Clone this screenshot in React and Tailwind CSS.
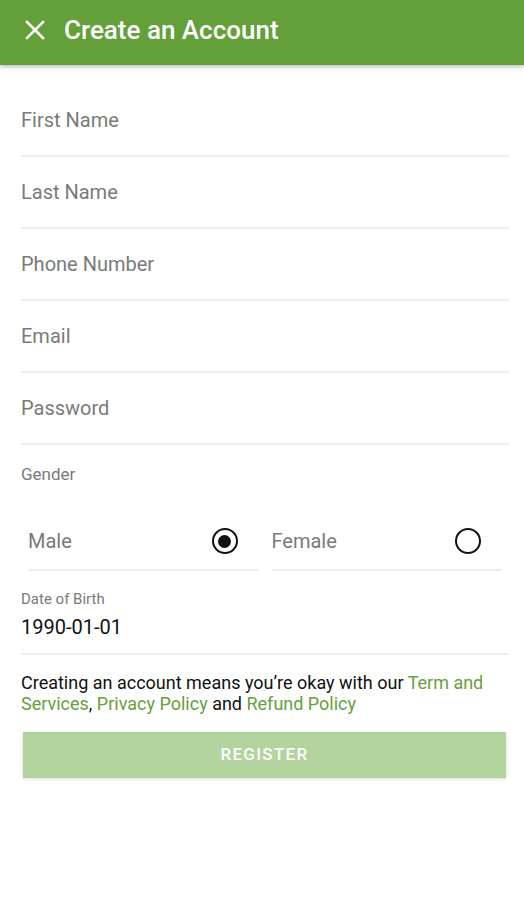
import React, { useState } from 'react';

const fields = ['First Name', 'Last Name', 'Phone Number', 'Email', 'Password'];

const Radio = ({ checked }) => (
  <span className="flex h-[26px] w-[26px] items-center justify-center rounded-full border-[2.5px] border-[#111]">
    {checked && <span className="h-[13px] w-[13px] rounded-full bg-[#111]"></span>}
  </span>
);

const App = () => {
  const [gender, setGender] = useState('male');

  return (
    <div className="min-h-[900px] w-[524px] bg-white font-['Roboto','Liberation_Sans',sans-serif]">
      {/* Header */}
      <div className="flex h-[65px] items-center bg-[#64a03a] pb-[5px] shadow-[0_2px_4px_rgba(0,0,0,0.25)]">
        <svg className="ml-[25px] h-[20px] w-[20px]" viewBox="0 0 20 20" fill="none" stroke="white" strokeWidth="2.6" strokeLinecap="square">
          <path d="M2 2 L18 18 M18 2 L2 18" />
        </svg>
        <h1 className="ml-[19px] text-[26px] font-medium text-white">Create an Account</h1>
      </div>

      <div className="pl-[21px] pr-[15px] pt-[20px]">
        {fields.map((f) => (
          <div key={f} className="flex h-[72px] items-center border-b-2 border-[#eeeeee] pb-[1px]">
            <span className="text-[20px] text-[#7a7a7a]">{f}</span>
          </div>
        ))}

        {/* Gender */}
        <div className="pt-[19px] text-[17px] leading-[20px] text-[#7a7a7a]">Gender</div>
        <div className="mt-[29px] flex gap-[14px] pl-[7px] pr-[7px]">
          <button
            type="button"
            onClick={() => setGender('male')}
            className="flex h-[58px] flex-1 items-center justify-between border-b-2 border-[#eeeeee] pr-[20px]"
          >
            <span className="text-[20px] text-[#7a7a7a]">Male</span>
            <Radio checked={gender === 'male'} />
          </button>
          <button
            type="button"
            onClick={() => setGender('female')}
            className="flex h-[58px] flex-1 items-center justify-between border-b-2 border-[#eeeeee] pr-[21px]"
          >
            <span className="text-[20px] text-[#7a7a7a]">Female</span>
            <Radio checked={gender === 'female'} />
          </button>
        </div>

        {/* Date of birth */}
        <div className="border-b-2 border-[#eeeeee] pb-[14px] pt-[19px]">
          <div className="text-[15px] leading-[18px] text-[#7a7a7a]">Date of Birth</div>
          <div className="mt-[7px] text-[20px] leading-[24px] text-[#111]">1990-01-01</div>
        </div>

        <p className="mt-[17px] text-[18px] leading-[21px] text-[#111]">
          Creating an account means you’re okay with our <span className="text-[#67a03c]">Term and Services</span>,{' '}
          <span className="text-[#67a03c]">Privacy Policy</span> and <span className="text-[#67a03c]">Refund Policy</span>
        </p>

        <button
          type="button"
          disabled
          className="ml-[2px] mt-[18px] flex h-[46px] w-[483px] items-center justify-center bg-[#b3d49e] text-[17px] font-medium tracking-[1.3px] text-white shadow-[0_1px_3px_rgba(0,0,0,0.15)]"
        >
          REGISTER
        </button>
      </div>
    </div>
  );
};

export default App;
